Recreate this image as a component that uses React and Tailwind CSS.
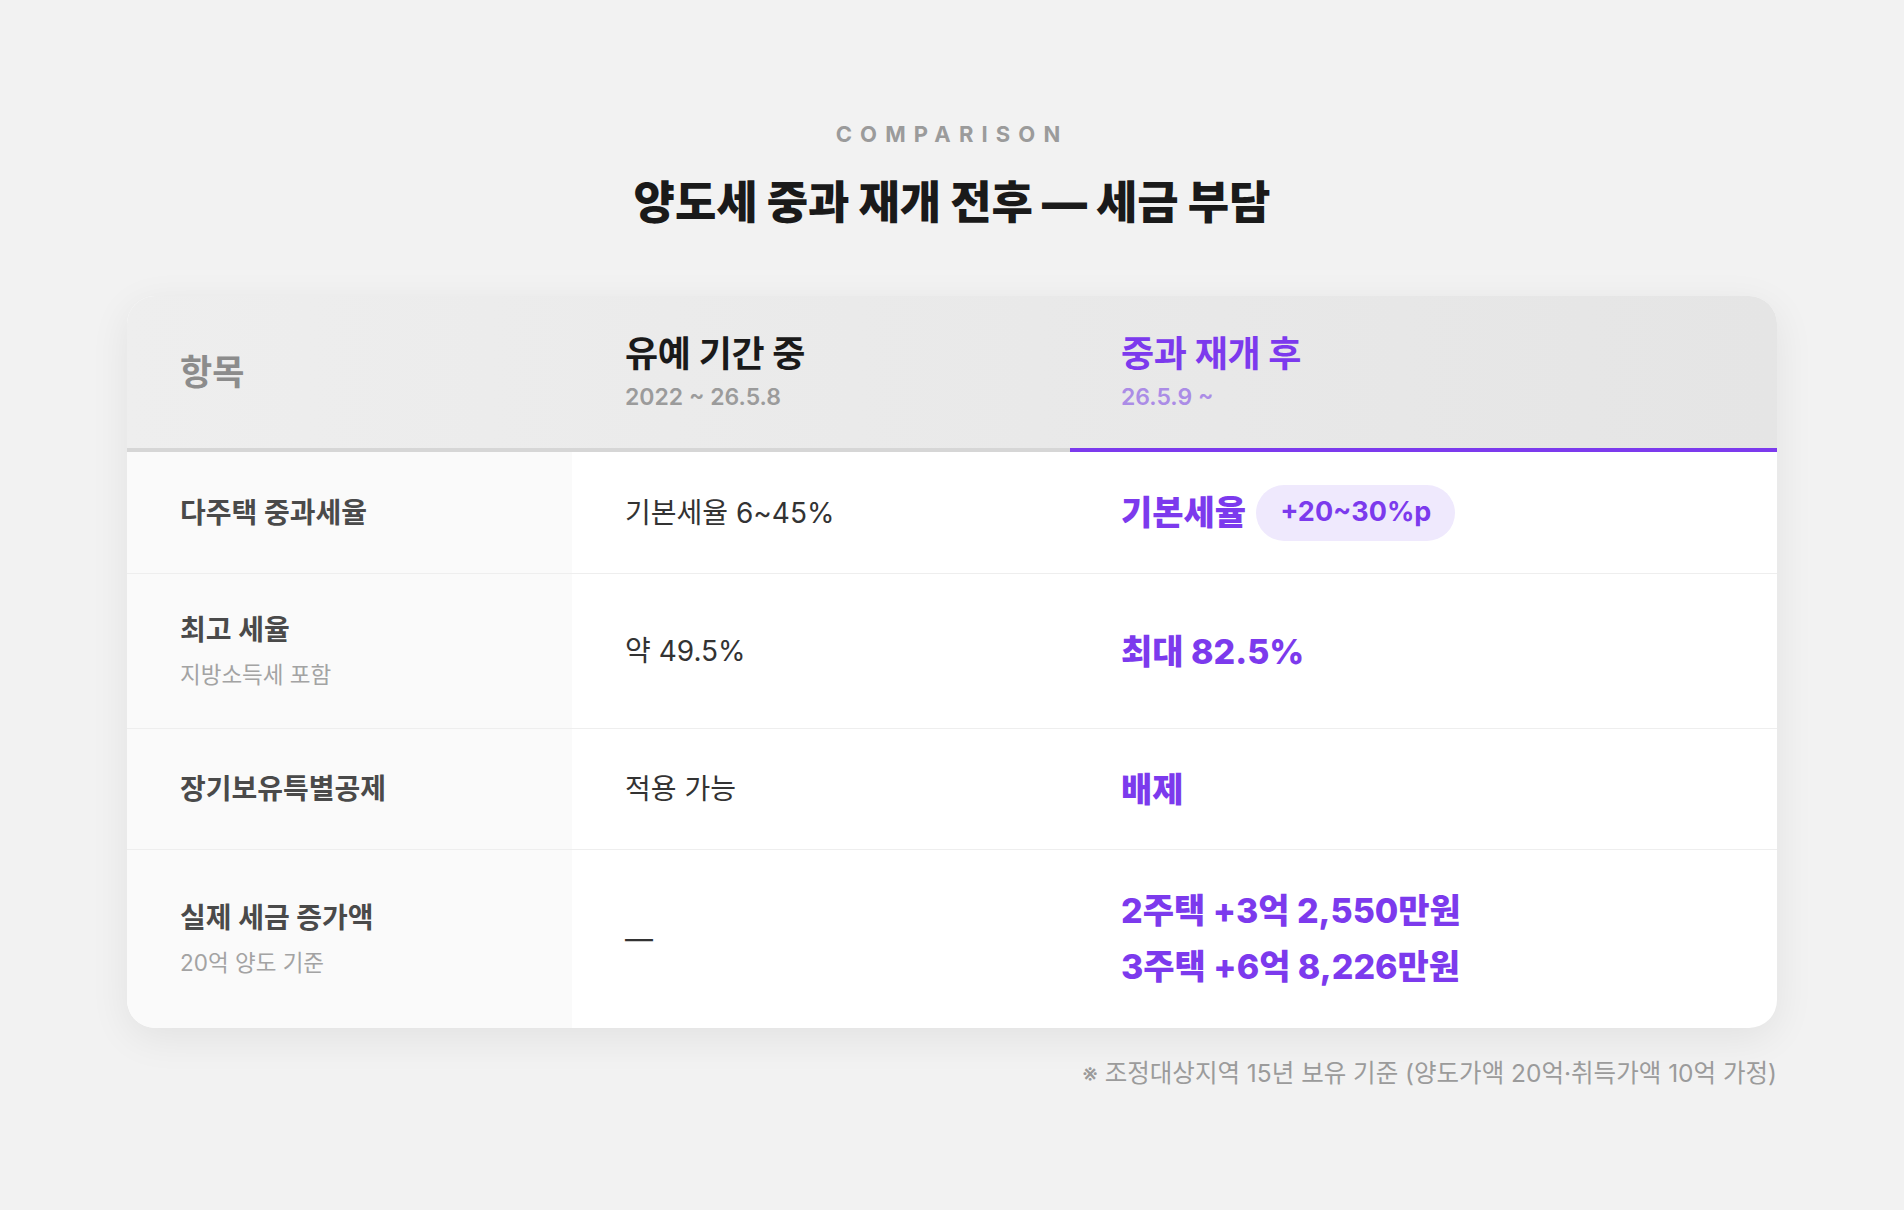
import React from "react";

const font = { fontFamily: 'Inter, "Noto Sans CJK KR", sans-serif' };

const purple = "text-[34px] font-extrabold text-[#7c3aed]";

const rows = [
  {
    label: "다주택 중과세율",
    value: "기본세율 6~45%",
    after: (
      <div className="flex items-center gap-[10px]">
        <span className={purple}>기본세율</span>
        <span className="flex h-[56px] items-center rounded-full bg-[#efe9fd] px-6 text-[27px] font-bold text-[#7c3aed]">
          +20~30%p
        </span>
      </div>
    ),
    h: "h-[122px]",
  },
  {
    label: "최고 세율",
    sub: "지방소득세 포함",
    value: "약 49.5%",
    after: <span className={purple}>최대 82.5%</span>,
    h: "h-[155px]",
  },
  {
    label: "장기보유특별공제",
    value: "적용 가능",
    after: <span className={purple}>배제</span>,
    h: "h-[121px]",
  },
  {
    label: "실제 세금 증가액",
    sub: "20억 양도 기준",
    value: "—",
    after: (
      <div className="flex flex-col gap-[12px] text-[34px] font-extrabold leading-[44px] text-[#7c3aed]">
        <span>2주택 +3억 2,550만원</span>
        <span>3주택 +6억 8,226만원</span>
      </div>
    ),
    h: "h-[178px]",
    last: true,
  },
];

export default function App() {
  return (
    <div style={font} className="min-h-screen bg-[#f2f2f2] pt-[122px]">
      <div className="mx-auto w-[1650px]">
        {/* Heading */}
        <p className="text-center text-[22px] font-bold leading-[24px] tracking-[0.37em] text-[#9b9b9b]">
          COMPARISON
        </p>
        <h1 className="mt-8 text-center text-[45px] font-black leading-[50px] text-[#1a1a1a]">
          양도세 중과 재개 전후 — 세금 부담
        </h1>

        {/* Table card */}
        <div className="mt-[68px] overflow-hidden rounded-[28px] bg-white shadow-[0_10px_40px_rgba(0,0,0,0.07)]">
          <div className="grid grid-cols-[445px_498px_1fr] bg-gradient-to-r from-[#eeeeee] to-[#e5e5e5]">
            <div className="flex h-[156px] items-center border-b-4 border-[#d6d6d6] pl-[53px]">
              <span className="text-[35px] font-semibold text-[#8c8c8c]">항목</span>
            </div>
            <div className="flex h-[156px] flex-col justify-center border-b-4 border-[#d6d6d6] pl-[53px]">
              <span className="text-[36px] font-bold leading-[40px] tracking-[-0.01em] text-[#1a1a1a]">유예 기간 중</span>
              <span className="mt-[10px] text-[23px] font-semibold leading-[26px] text-[#9b9b9b]">2022 ~ 26.5.8</span>
            </div>
            <div className="flex h-[156px] flex-col justify-center border-b-4 border-[#7c3aed] pl-[51px]">
              <span className="text-[36px] font-bold leading-[40px] tracking-[-0.01em] text-[#7c3aed]">중과 재개 후</span>
              <span className="mt-[10px] text-[23px] font-semibold leading-[26px] text-[#ab8ce6]">26.5.9 ~</span>
            </div>
          </div>

          {rows.map((row) => (
            <div
              key={row.label}
              className={`grid grid-cols-[445px_498px_1fr] ${row.h} ${row.last ? "" : "border-b border-[#eeeeee]"}`}
            >
              <div className="flex flex-col justify-center bg-[#fafafa] pl-[53px]">
                <span className="text-[28px] font-bold leading-[34px] text-[#4a4a4a]">{row.label}</span>
                {row.sub && (
                  <span className="mt-[14px] text-[22.5px] leading-[28px] text-[#a3a3a3]">{row.sub}</span>
                )}
              </div>
              <div className="flex items-center pl-[53px]">
                <span className="text-[28px] text-[#333333]">{row.value}</span>
              </div>
              <div className="flex items-center pl-[51px]">{row.after}</div>
            </div>
          ))}
        </div>

        <p className="mt-[30px] text-right text-[24.5px] leading-[30px] text-[#9b9b9b]">
          ※ 조정대상지역 15년 보유 기준 (양도가액 20억·취득가액 10억 가정)
        </p>
      </div>
    </div>
  );
}
